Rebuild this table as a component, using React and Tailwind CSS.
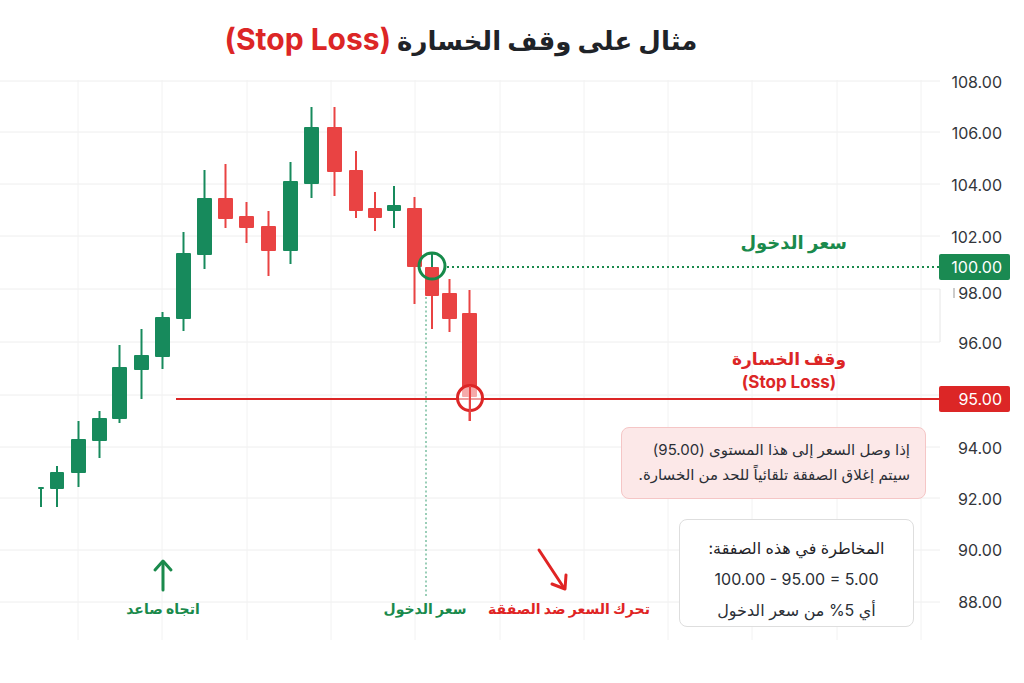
import React from "react";

const G = "#178a5c";
const R = "#e94343";

const candles = [
  [38, 44, 487, 487, 489, 507, "g"],
  [50, 64, 466, 472, 489, 507, "g"],
  [71, 86, 421, 439, 473, 487, "g"],
  [92, 107, 411, 418, 441, 458, "g"],
  [112, 127, 345, 367, 419, 423, "g"],
  [134, 149, 329, 355, 370, 399, "g"],
  [155, 170, 312, 317, 357, 369, "g"],
  [176, 191, 232, 253, 319, 331, "g"],
  [197, 212, 170, 198, 255, 269, "g"],
  [218, 233, 164, 198, 219, 228, "r"],
  [239, 254, 202, 216, 228, 243, "r"],
  [261, 276, 211, 226, 251, 276, "r"],
  [283, 298, 162, 181, 251, 264, "g"],
  [304, 319, 107, 127, 184, 198, "g"],
  [327, 342, 107, 127, 172, 196, "r"],
  [349, 363, 151, 170, 211, 218, "r"],
  [368, 382, 192, 208, 218, 231, "r"],
  [387, 401, 186, 205, 211, 228, "g"],
  [407, 422, 197, 208, 267, 304, "r"],
  [425, 439, 252, 267, 296, 329, "r"],
  [442, 457, 279, 293, 319, 332, "r"],
  [462, 477, 290, 313, 397, 421, "r"],
];

const hGrid = [81, 132, 184, 236, 289, 342, 395, 447, 498, 550, 602];
const vGrid = [78, 162, 247, 331, 415, 500, 584, 668, 752, 837, 921];

const axis = [
  ["108.00", "top-[-8px]"],
  ["106.00", "top-[43px]"],
  ["104.00", "top-[95px]"],
  ["102.00", "top-[147px]"],
  ["98.00", "top-[203px]"],
  ["96.00", "top-[253px]"],
  ["94.00", "top-[358px]"],
  ["92.00", "top-[409px]"],
  ["90.00", "top-[460px]"],
  ["88.00", "top-[512px]"],
];

function Chart() {
  return (
    <svg
      className="absolute inset-0 w-full h-full"
      viewBox="0 80 1024 603"
      width="1024"
      height="603"
    >
      {hGrid.map((y) => (
        <line key={"h" + y} x1="0" x2="940" y1={y} y2={y} stroke="#eeeeee" strokeWidth="1" />
      ))}
      {vGrid.map((x) => (
        <line key={"v" + x} x1={x} x2={x} y1="72" y2="640" stroke="#f2f2f2" strokeWidth="1" />
      ))}
      <line x1="940" x2="940" y1="289" y2="342" stroke="#e6e6e6" strokeWidth="1" />
      {candles.map(([l, r, wt, bt, bb, wb, c], i) => {
        const col = c === "g" ? G : R;
        const cx = (l + r) / 2;
        return (
          <g key={i}>
            <line x1={cx} x2={cx} y1={wt} y2={wb} stroke={col} strokeWidth="2" />
            <rect x={l} y={bt} width={r - l} height={Math.max(bb - bt, 2)} fill={col} rx="1" />
          </g>
        );
      })}
      <line x1="432" x2="432" y1="253" y2="267" stroke={G} strokeWidth="2" />
      <line x1="176" x2="940" y1="399" y2="399" stroke="#dc2626" strokeWidth="2" />
      <line x1="447" x2="940" y1="267" y2="267" stroke="#1a8a4c" strokeWidth="2" strokeDasharray="2 3" />
      <line x1="426" x2="426" y1="297" y2="596" stroke="#79bfa0" strokeWidth="1.5" strokeDasharray="2 2.5" />
      <circle cx="432" cy="266" r="13" fill="none" stroke="#168a4a" strokeWidth="3" />
      <circle cx="470" cy="398" r="12.5" fill="rgba(255,255,255,0.55)" stroke="#dc2626" strokeWidth="3" />
      <line x1="470" x2="470" y1="386" y2="421" stroke={R} strokeWidth="2" />
      <line x1="954" x2="954" y1="288" y2="298" stroke="#bbbbbb" strokeWidth="1.5" />
      <g stroke="#1a8a4c" strokeWidth="3" fill="none" strokeLinecap="round" strokeLinejoin="round">
        <line x1="163" x2="163" y1="562" y2="590" />
        <polyline points="155,570 163,561 171,570" />
      </g>
      <g stroke="#e02424" strokeWidth="3" fill="none" strokeLinecap="round" strokeLinejoin="round">
        <line x1="539" x2="564" y1="550" y2="588" />
        <polyline points="552,584 565,589 566,575" />
      </g>
    </svg>
  );
}

export default function App() {
  return (
    <div className="w-[1024px] h-[683px] bg-white overflow-hidden font-['Inter','DejaVu_Sans',sans-serif] text-[#2b2f36]">
      <div className="w-[922px] h-[80px] flex items-center justify-center pb-[2px]">
        <h1 dir="rtl" className="text-[26px] font-bold text-[#1f2328] leading-none whitespace-nowrap">
          مثال على وقف الخسارة <span className="text-[30px] text-[#dc2626]">(Stop Loss)</span>
        </h1>
      </div>
      <div className="relative h-[603px]">
        <Chart />
        {axis.map(([v, t]) => (
          <div key={v} className={"absolute right-[22px] h-[20px] leading-[20px] text-[16px] text-[#33363b] " + t}>
            {v}
          </div>
        ))}
        <div className="absolute left-[939px] top-[174px] w-[71px] h-[26px] bg-[#1a8a52] text-white text-[16px] leading-[26px] text-right pr-[8px] rounded-[2px]">
          100.00
        </div>
        <div className="absolute left-[939px] top-[306px] w-[71px] h-[26px] bg-[#dc2626] text-white text-[16px] leading-[26px] text-right pr-[8px] rounded-[2px]">
          95.00
        </div>

        <div dir="rtl" className="absolute right-[177px] top-[151px] h-[24px] leading-[24px] text-[18px] font-bold text-[#1a8a4c] whitespace-nowrap">
          سعر الدخول
        </div>
        <div dir="rtl" className="absolute right-[175px] top-[268px] w-[120px] text-center text-[17px] leading-[23px] font-bold text-[#dc2626] whitespace-nowrap">
          <div>وقف الخسارة</div>
          <div>(Stop Loss)</div>
        </div>

        <div dir="rtl" className="absolute left-[621px] top-[347px] w-[305px] h-[72px] bg-[#fce8e8] border border-[#f5c6c6] rounded-[8px] px-[15px] pt-[9px] text-[15px] leading-[25px] text-[#2b2f36] whitespace-nowrap">
          <div>إذا وصل السعر إلى هذا المستوى (95.00)</div>
          <div>سيتم إغلاق الصفقة تلقائياً للحد من الخسارة.</div>
        </div>

        <div dir="rtl" className="absolute left-[679px] top-[439px] w-[235px] h-[108px] bg-white border border-[#dedede] rounded-[8px] pt-[13px] flex flex-col items-center text-[16px] leading-[31px] text-[#2b2f36] whitespace-nowrap">
          <div className="text-[#1f2328]">المخاطرة في هذه الصفقة:</div>
          <div dir="ltr">100.00 - 95.00 = 5.00</div>
          <div>أي 5% من سعر الدخول</div>
        </div>

        <div dir="rtl" className="absolute left-[113px] top-[518px] w-[100px] h-[22px] leading-[22px] text-center text-[14px] font-bold text-[#1a8a4c] whitespace-nowrap">
          اتجاه صاعد
        </div>
        <div dir="rtl" className="absolute left-[375px] top-[518px] w-[100px] h-[22px] leading-[22px] text-center text-[14px] font-bold text-[#1a8a4c] whitespace-nowrap">
          سعر الدخول
        </div>
        <div dir="rtl" className="absolute left-[479px] top-[518px] w-[180px] h-[22px] leading-[22px] text-center text-[14px] font-bold text-[#e02424] whitespace-nowrap">
          تحرك السعر ضد الصفقة
        </div>
      </div>
    </div>
  );
}
